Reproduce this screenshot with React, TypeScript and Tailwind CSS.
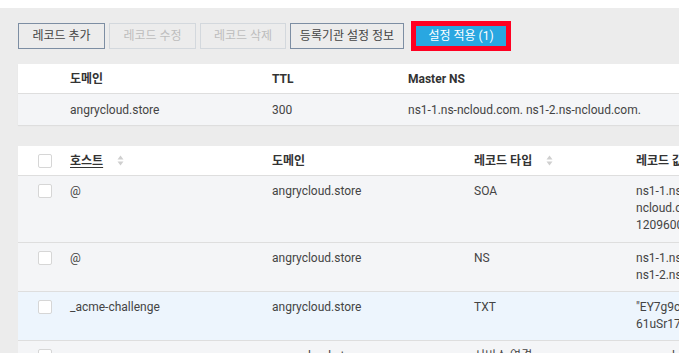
import React from "react";

const font = { fontFamily: 'Roboto, "Noto Sans CJK KR", sans-serif' };

function SortIcon() {
  return (
    <svg width="7" height="11" viewBox="0 0 7 11" className="ml-[14px] inline-block shrink-0">
      <path d="M3.5 0.5 L6.5 4.5 L0.5 4.5 Z" fill="#cfcfcf" />
      <path d="M3.5 10.5 L6.5 6.5 L0.5 6.5 Z" fill="#cfcfcf" />
    </svg>
  );
}

function Checkbox() {
  return <div className="h-[14px] w-[14px] rounded-[2px] border border-[#d6d6d6] bg-white" />;
}

interface Rec {
  host: string;
  type: string;
  value: string[];
  highlight?: boolean;
}

const records: Rec[] = [
  { host: "@", type: "SOA", value: ["ns1-1.ns-ncloud.com. ns1-2.ns-", "ncloud.com. 1 21600 1800", "1209600 300"] },
  { host: "@", type: "NS", value: ["ns1-1.ns-ncloud.com.", "ns1-2.ns-ncloud.com."] },
  { host: "_acme-challenge", type: "TXT", value: ["\"EY7g9cQpK2vR", "61uSr17bXn\""], highlight: true },
  { host: "www", type: "서비스 연결", value: ["angrycloud.store."] },
];

export default function App() {
  return (
    <div style={font} className="h-[353px] w-[679px] overflow-hidden bg-white text-[12px] text-[#444]">
      <div className="h-[8px] bg-white" />
      <div className="h-[345px] bg-[#ececec] pl-[18px] pt-[13px]">
        {/* toolbar */}
        <div className="flex h-[30px] items-center gap-[4px]">
          <button className="h-[26px] w-[87px] border border-[#7d8ea3] bg-[#ececec] text-[#444]">레코드 추가</button>
          <button className="h-[26px] w-[87px] border border-[#d3d8dd] bg-[#ececec] text-[#bdbdbd]">레코드 수정</button>
          <button className="h-[26px] w-[86px] border border-[#d3d8dd] bg-[#ececec] text-[#bdbdbd]">레코드 삭제</button>
          <button className="h-[26px] w-[114px] border border-[#7d8ea3] bg-[#ececec] text-[#444]">등록기관 설정 정보</button>
          <div className="ml-[3px] border-[5px] border-[#ff0022]">
            <button className="h-[20px] w-[90px] bg-[#29a7e1] text-white">설정 적용 (1)</button>
          </div>
        </div>

        {/* domain table */}
        <div className="mt-[13px] overflow-hidden bg-white shadow-[0_1px_1px_rgba(0,0,0,0.06)]">
          <div className="flex h-[30px] items-center border-b border-[#dedede] font-bold text-[#333] whitespace-nowrap">
            <div className="w-[52px] shrink-0" />
            <div className="w-[202px] shrink-0">도메인</div>
            <div className="w-[136px] shrink-0">TTL</div>
            <div className="flex-1">Master NS</div>
          </div>
          <div className="flex h-[31px] items-center bg-[#f4f5f7] whitespace-nowrap">
            <div className="w-[52px] shrink-0" />
            <div className="w-[202px] shrink-0">angrycloud.store</div>
            <div className="w-[136px] shrink-0">300</div>
            <div className="flex-1">ns1-1.ns-ncloud.com. ns1-2.ns-ncloud.com.</div>
          </div>
        </div>

        {/* records table */}
        <div className="mt-[21px] overflow-hidden bg-white">
          <div className="flex h-[30px] items-center border-b border-[#dedede] font-bold text-[#333] whitespace-nowrap">
            <div className="flex w-[52px] shrink-0 justify-center pl-[2px]">
              <Checkbox />
            </div>
            <div className="flex w-[202px] shrink-0 items-center">
              <span className="underline underline-offset-2">호스트</span>
              <SortIcon />
            </div>
            <div className="w-[202px] shrink-0">도메인</div>
            <div className="flex w-[162px] shrink-0 items-center">
              레코드 타입
              <SortIcon />
            </div>
            <div className="min-w-0 flex-1">레코드 값</div>
          </div>
          {records.map((r, i) => (
            <div
              key={i}
              className={`flex border-b border-[#dedede] pt-[7px] leading-[17px] whitespace-nowrap ${
                r.value.length > 2 ? "pb-[8px]" : "pb-[7px]"
              } ${r.highlight ? "bg-[#edf5fd]" : "bg-[#f4f5f7]"}`}
            >
              <div className="flex w-[52px] shrink-0 justify-center pl-[2px] pt-[1px]">
                <Checkbox />
              </div>
              <div className="w-[202px] shrink-0">{r.host}</div>
              <div className="w-[202px] shrink-0">angrycloud.store</div>
              <div className="w-[162px] shrink-0">{r.type}</div>
              <div className="min-w-0 flex-1 overflow-hidden">
                {r.value.map((v, j) => (
                  <div key={j}>{v}</div>
                ))}
              </div>
            </div>
          ))}
        </div>
      </div>
    </div>
  );
}
